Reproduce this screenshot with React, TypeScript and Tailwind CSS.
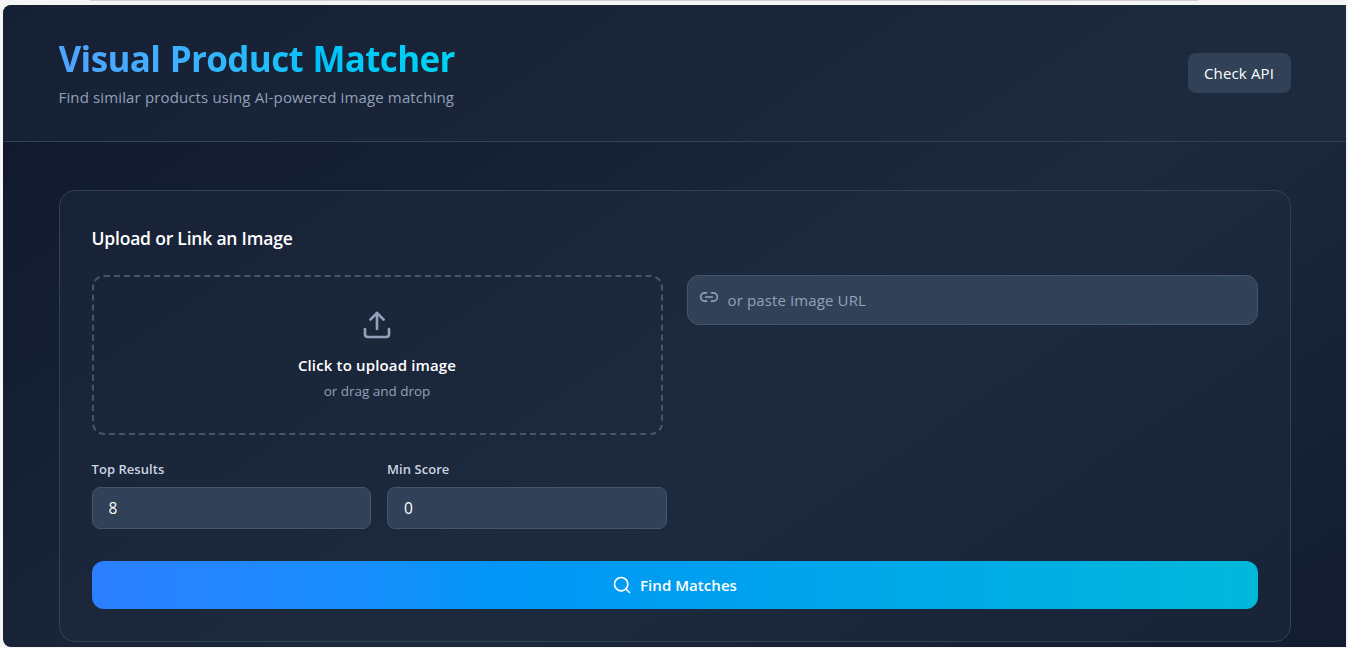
import { useState } from 'react';

function UploadIcon() {
  return (
    <svg className="h-8 w-8 text-slate-400" viewBox="0 0 24 24" fill="none" stroke="currentColor" strokeWidth="2" strokeLinecap="round" strokeLinejoin="round">
      <path d="M21 15v4a2 2 0 0 1-2 2H5a2 2 0 0 1-2-2v-4" />
      <path d="M17 8l-5-5-5 5" />
      <path d="M12 3v12" />
    </svg>
  );
}

function LinkIcon() {
  return (
    <svg className="h-5 w-5" viewBox="0 0 24 24" fill="none" stroke="currentColor" strokeWidth="2" strokeLinecap="round" strokeLinejoin="round">
      <path d="M9 17H7A5 5 0 0 1 7 7h2" />
      <path d="M15 7h2a5 5 0 1 1 0 10h-2" />
      <path d="M8 12h8" />
    </svg>
  );
}

function SearchIcon() {
  return (
    <svg className="h-5 w-5" viewBox="0 0 24 24" fill="none" stroke="currentColor" strokeWidth="2" strokeLinecap="round" strokeLinejoin="round">
      <circle cx="11" cy="11" r="8" />
      <path d="m21 21-4.35-4.35" />
    </svg>
  );
}

function Header() {
  return (
    <header className="border-b border-slate-700 bg-slate-800/50">
      <div className="mx-auto flex max-w-7xl items-center justify-between px-6 py-8">
        <div>
          <h1 className="w-fit bg-gradient-to-r from-blue-400 to-cyan-400 bg-clip-text pt-1 text-[35px] leading-9 font-bold tracking-[-0.65px] [word-spacing:1px] whitespace-nowrap text-transparent">
            Visual Product Matcher
          </h1>
          <p className="mt-2 text-[15px] leading-6 tracking-[0.14px] whitespace-nowrap text-slate-400">
            Find similar products using AI-powered image matching
          </p>
        </div>
        <button className="flex h-10 w-[103px] items-center justify-center rounded-lg bg-slate-700 text-[15px] font-medium tracking-[0.15px] whitespace-nowrap text-white">
          Check API
        </button>
      </div>
    </header>
  );
}

function NumberField({ label, initial }: { label: string; initial: string }) {
  const [value, setValue] = useState(initial);
  return (
    <label className="block">
      <span className="mb-2 block text-[13px] leading-5 font-semibold tracking-[0.05px] text-slate-300">{label}</span>
      <input
        value={value}
        onChange={(e) => setValue(e.target.value)}
        className="block h-[42px] w-full rounded-lg border border-slate-600 bg-slate-700 px-4 text-[15.5px] text-white outline-none"
      />
    </label>
  );
}

export default function App() {
  return (
    <div className="h-[648px] overflow-hidden bg-[#f5f5f6] font-['Open_Sans','Noto_Sans',sans-serif]">
      <div className="mr-[150px] ml-[90px] h-px bg-[#cfcfd0]" />
      <div className="mt-1 mr-0.5 ml-[3px] h-[642px] overflow-hidden rounded-l-lg bg-slate-900">
        <div className="h-[910px] bg-gradient-to-br from-slate-900 via-slate-800 to-slate-900">
          <Header />
          <main className="mx-auto max-w-7xl px-6 py-12">
            <section className="rounded-2xl border border-slate-700 bg-slate-800/50 p-8">
              <h2 className="mb-[23px] pt-px text-[17.5px] leading-7 font-semibold tracking-[-0.2px] text-white">
                Upload or Link an Image
              </h2>
              <div className="grid grid-cols-2 gap-6">
                <div className="flex h-40 flex-col items-center rounded-xl border-2 border-dashed border-slate-600 pt-8">
                  <UploadIcon />
                  <p className="mt-3 text-[15px] leading-6 font-semibold tracking-[0.15px] text-white">Click to upload image</p>
                  <p className="mt-1 text-[13.5px] leading-5 tracking-[-0.03px] text-slate-400">or drag and drop</p>
                </div>
                <div className="flex h-[50px] rounded-xl border border-slate-600 bg-slate-700 pl-[11px] text-slate-400">
                  <span className="pt-[11px]">
                    <LinkIcon />
                  </span>
                  <input
                    placeholder="or paste image URL"
                    className="ml-[9px] h-12 w-full bg-transparent text-[15px] tracking-[0.15px] text-white outline-none placeholder:text-slate-400"
                  />
                </div>
              </div>
              <div className="mt-6 grid grid-cols-4 gap-4">
                <NumberField label="Top Results" initial="8" />
                <NumberField label="Min Score" initial="0" />
              </div>
              <button className="mt-8 flex h-12 w-full items-center justify-center gap-2 rounded-xl bg-gradient-to-r from-blue-500 to-cyan-500 text-[15px] font-semibold tracking-[0.05px] text-white">
                <SearchIcon />
                Find Matches
              </button>
            </section>
          </main>
        </div>
      </div>
    </div>
  );
}
